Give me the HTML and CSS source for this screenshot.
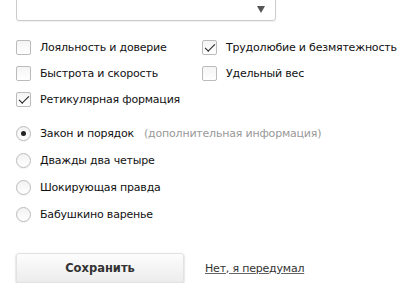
FILE: index.html
```html
<!DOCTYPE html>
<html lang="ru">
<head>
  <meta charset="UTF-8" />
  <title>Настройки</title>
  <link rel="stylesheet" href="styles.css">
</head>
<body>
  <form class="form">
    <div class="select">
      <span class="select-arrow"></span>
    </div>

    <div class="checks">
      <label class="opt"><span class="box"></span>Лояльность и доверие</label>
      <label class="opt"><span class="box checked"></span>Трудолюбие и безмятежность</label>
      <label class="opt"><span class="box"></span>Быстрота и скорость</label>
      <label class="opt"><span class="box"></span>Удельный вес</label>
      <label class="opt"><span class="box checked"></span>Ретикулярная формация</label>
    </div>

    <div class="radios">
      <label class="opt"><span class="radio on"></span>Закон и порядок <span class="hint">(дополнительная информация)</span></label>
      <label class="opt"><span class="radio"></span>Дважды два четыре</label>
      <label class="opt"><span class="radio"></span>Шокирующая правда</label>
      <label class="opt"><span class="radio"></span>Бабушкино варенье</label>
    </div>

    <div class="actions">
      <button type="button" class="btn">Сохранить</button>
      <a href="#" class="cancel">Нет, я передумал</a>
    </div>
  </form>
</body>
</html>
```

FILE: styles.css
```css
body {
  margin: 0;
  padding: 0;
  background: #fff;
  font-family: "DejaVu Sans", Tahoma, sans-serif;
  font-size: 11px;
  letter-spacing: -0.2px;
  color: #111;
}

.form {
  padding: 0 16px;
  margin-top: -9px;
}

.select {
  position: relative;
  width: 258px;
  height: 28px;
  border: 1px solid #ccc;
  border-radius: 3px;
  box-shadow: 0 1px 1px rgba(0,0,0,0.06);
}

.select-arrow {
  position: absolute;
  right: 10px;
  top: 14px;
  border-left: 4px solid transparent;
  border-right: 4px solid transparent;
  border-top: 7px solid #555;
}

.checks {
  display: grid;
  grid-template-columns: 186px 1fr;
  row-gap: 11px;
  margin-top: 19px;
}

.opt {
  display: flex;
  align-items: center;
  height: 15px;
  white-space: nowrap;
}

.box {
  position: relative;
  width: 13px;
  height: 13px;
  border: 1px solid #bbb;
  border-radius: 2px;
  background: linear-gradient(#f4f4f4, #fff);
  margin-right: 9px;
  flex: none;
}

.box.checked::after {
  content: "";
  position: absolute;
  left: 2px;
  top: 1px;
  width: 9px;
  height: 4px;
  border-left: 1.6px solid #222;
  border-bottom: 1.6px solid #222;
  transform: translate(0, 2px) rotate(-45deg);
}

.radios {
  display: flex;
  flex-direction: column;
  gap: 12px;
  margin-top: 19px;
}

.radio {
  position: relative;
  width: 13px;
  height: 13px;
  border: 1px solid #bbb;
  border-radius: 50%;
  background: linear-gradient(#f2f2f2, #fff);
  box-shadow: 0 1px 1px rgba(0,0,0,0.05);
  margin-right: 9px;
  flex: none;
}

.radio.on::after {
  content: "";
  position: absolute;
  left: 4px;
  top: 4px;
  width: 5px;
  height: 5px;
  border-radius: 50%;
  background: #222;
}

.hint {
  color: #999;
  margin-left: 10px;
}

.actions {
  display: flex;
  align-items: center;
  gap: 21px;
  margin-top: 31px;
}

.btn {
  width: 168px;
  height: 30px;
  border: 1px solid #e2e2e2;
  border-radius: 3px;
  background: linear-gradient(#fdfdfd, #ececec);
  box-shadow: 0 1px 2px rgba(0,0,0,0.3);
  font-family: inherit;
  font-size: 11.5px;
  font-weight: bold;
  letter-spacing: 0;
  color: #333;
}

.cancel {
  color: #333;
  text-decoration: underline;
  text-decoration-color: #666;
}
```
